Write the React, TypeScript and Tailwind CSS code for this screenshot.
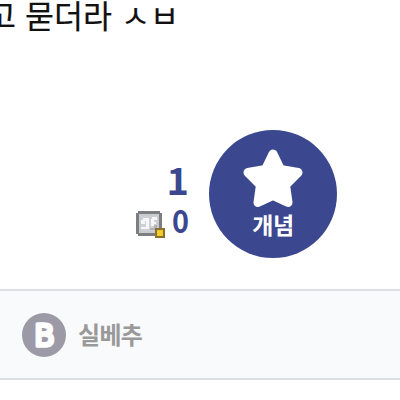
const iconPixels = [
  { x: 3, y: 0, w: 22, h: 25, color: "#7c7e81" },
  { x: 1, y: 2, w: 26, h: 21, color: "#7c7e81" },
  { x: 4, y: 3, w: 20, h: 19, color: "#c9cbcf" },
  { x: 6, y: 5, w: 16, h: 15, color: "#cfd0d5" },
  { x: 6, y: 9, w: 4, h: 4, color: "#f7f7f8" },
  { x: 8, y: 7, w: 6, h: 3, color: "#f7f7f8" },
  { x: 11, y: 9, w: 3, h: 8, color: "#f7f7f8" },
  { x: 17, y: 6, w: 5, h: 3, color: "#f7f7f8" },
  { x: 16, y: 8, w: 3, h: 7, color: "#f7f7f8" },
  { x: 18, y: 11, w: 3, h: 2, color: "#f7f7f8" },
  { x: 6, y: 16, w: 8, h: 2, color: "#f7f7f8" },
  { x: 19, y: 14, w: 3, h: 4, color: "#b0b1b7" },
  { x: 15, y: 17, w: 5, h: 2, color: "#b0b1b7" },
  { x: 20, y: 17, w: 10, h: 10, color: "#89712b" },
  { x: 22, y: 19, w: 6, h: 6, color: "#f0cd2b" },
];

function MemberIcon() {
  return (
    <svg width="30" height="27" viewBox="0 0 30 27" className="shrink-0">
      {iconPixels.map((p, i) => (
        <rect key={i} x={p.x} y={p.y} width={p.w} height={p.h} fill={p.color} />
      ))}
    </svg>
  );
}

function Star() {
  return (
    <svg width="60" height="60" viewBox="0 0 60 60">
      <path
        d="M30 5 L37.500 20.500 L55 23.500 L42.500 36 L45 53.500 L30 46.500 L15 53.500 L17.500 36 L5 23.500 L22.500 20.500 Z"
        fill="white"
        stroke="white"
        strokeWidth="9"
        strokeLinejoin="round"
      />
    </svg>
  );
}

export default function App() {
  return (
    <div className="h-[400px] w-[400px] overflow-hidden bg-white font-['Noto_Sans_CJK_KR',sans-serif]">
      <p className="-ml-[13px] h-[130px] whitespace-nowrap text-[31.5px] leading-[28px] text-[#111] [word-spacing:2px] [-webkit-text-stroke:0.2px_#111]">
        고 묻더라 ㅅㅂ
      </p>

      <div className="flex h-[159px] items-start gap-5 pl-[135px]">
        <div className="flex w-[54px] flex-col items-end pt-[30px] font-bold text-[#3b4890]">
          <span className="text-[38px] leading-[38px]">1</span>
          <div className="flex w-full items-start justify-between">
            <div className="pt-[13px]">
              <MemberIcon />
            </div>
            <span className="origin-right scale-x-90 text-[32px] font-bold leading-[43px]">
              0
            </span>
          </div>
        </div>
        <button className="flex h-32 w-32 flex-col items-center rounded-full bg-[#3b4890] pt-[19px]">
          <Star />
          <span className="mt-px text-[23px] font-bold leading-[28px] tracking-[-0.5px] text-white">
            개념
          </span>
        </button>
      </div>

      <div className="flex h-[91px] items-center gap-3 border-y-2 border-[#dddee1] bg-[#f9fafc] pl-[22px]">
        <svg width="44" height="44" viewBox="0 0 44 44">
          <circle cx="22" cy="22" r="22" fill="#9d9aa8" />
          <text
            x="22"
            y="33"
            textAnchor="middle"
            fontSize="30"
            className="fill-white stroke-white font-normal"
            strokeWidth="3.4"
            strokeLinejoin="round"
          >
            B
          </text>
        </svg>
        <span className="pb-[2px] text-[24px] font-bold leading-[32px] tracking-[-0.7px] text-[#999]">
          실베추
        </span>
      </div>
    </div>
  );
}
